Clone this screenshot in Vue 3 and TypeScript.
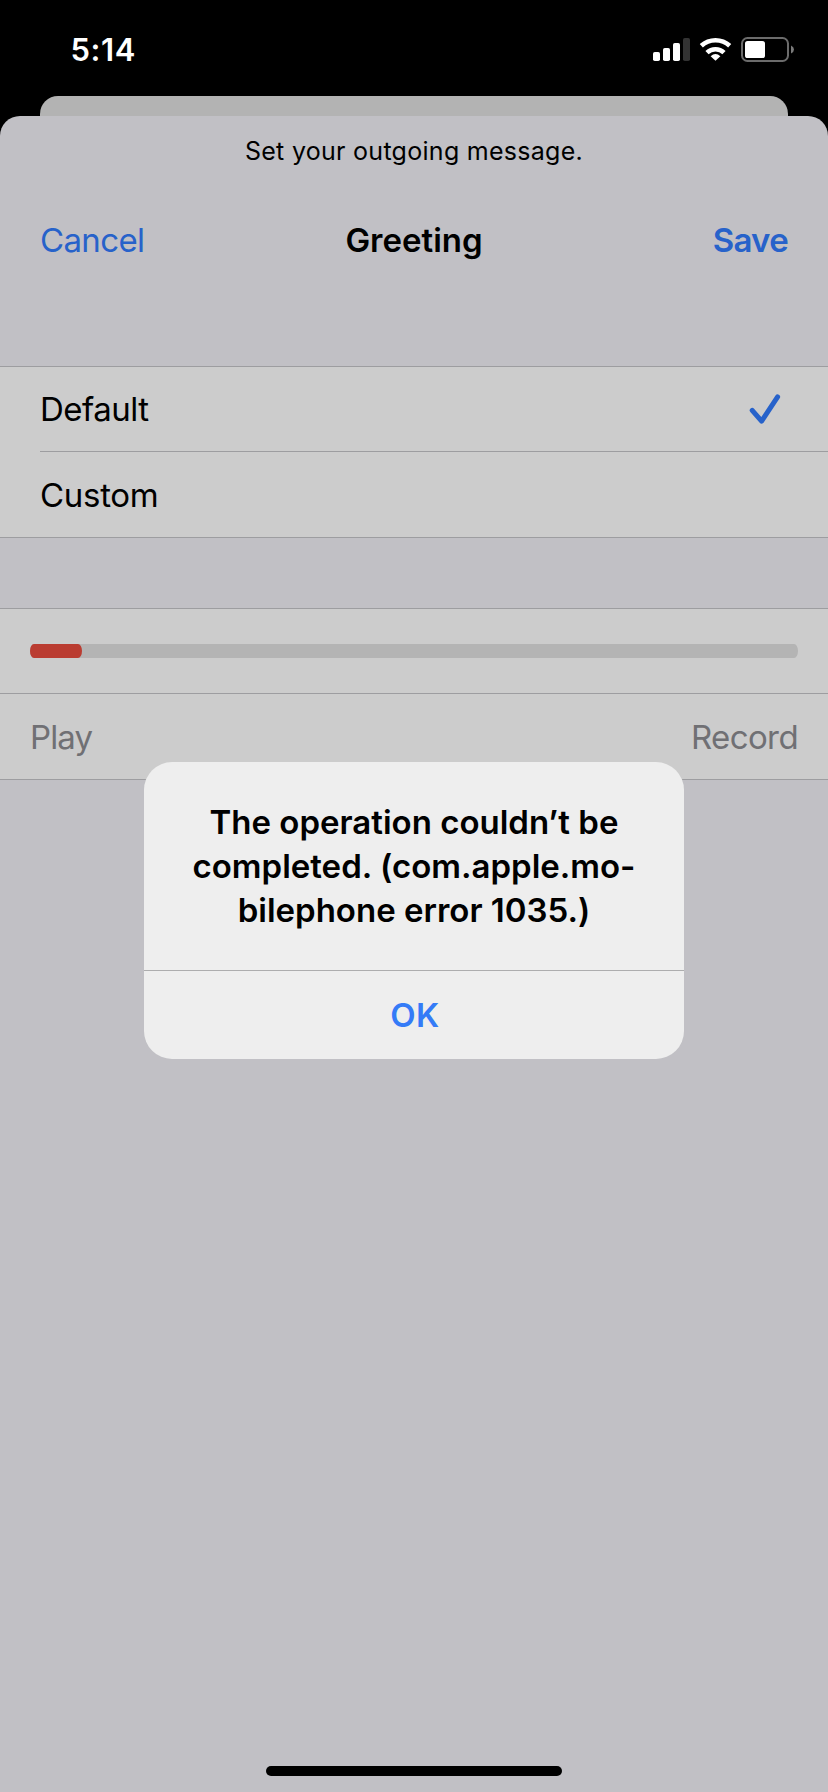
<script setup lang="ts">
interface GreetingOption {
  id: string
  label: string
  selected: boolean
}

const options: GreetingOption[] = [
  { id: 'default', label: 'Default', selected: true },
  { id: 'custom', label: 'Custom', selected: false },
]

const alertLines: string[] = [
  'The operation couldn’t be',
  'completed. (com.apple.mo-',
  'bilephone error 1035.)',
]

const progress = 52 / 768
</script>

<template>
  <div class="screen">
    <header class="status">
      <span class="time">5:14</span>
      <svg class="status-icons" width="144" height="28" viewBox="652 36 144 28">
        <g fill="#fff">
          <rect x="653" y="52" width="7" height="9" rx="1.8" />
          <rect x="663" y="48" width="7" height="13" rx="1.8" />
          <rect x="673" y="43" width="7" height="18" rx="1.8" />
          <rect x="683" y="38" width="7" height="23" rx="1.8" fill="#333" />
          <path d="M715.5 60.8 L710.6 56.2 Q715.5 51.8 720.4 56.2 Z" />
        </g>
        <g fill="none" stroke="#fff" stroke-width="4.6">
          <path d="M707 52.6 A12.3 12.3 0 0 1 724 52.6" />
          <path d="M701.3 45.8 A20.8 20.8 0 0 1 729.7 45.8" />
        </g>
        <rect x="742" y="38" width="46" height="23" rx="5.5" fill="none" stroke="#6b6b6b" stroke-width="2" />
        <rect x="745" y="41" width="20" height="17" rx="2.6" fill="#fff" />
        <path d="M791 45.5 Q794 46.8 794 49.5 Q794 52.2 791 53.5 Z" fill="#7a7a7a" />
      </svg>
    </header>

    <div class="card-behind"></div>

    <main class="sheet">
      <p class="prompt"><span>Set your outgoing message.</span></p>
      <nav class="nav">
        <span class="link cancel">Cancel</span>
        <span class="title">Greeting</span>
        <span class="link save">Save</span>
      </nav>

      <section class="group options">
        <div v-for="o in options" :key="o.id" class="row">
          <span :class="o.id">{{ o.label }}</span>
          <svg v-if="o.selected" class="check" width="32" height="32" viewBox="0 0 32 32">
            <path d="M3.2 17.3 L12.6 28.2 L28.6 3.8" />
          </svg>
        </div>
      </section>

      <section class="group player">
        <div class="row">
          <div class="track">
            <div class="fill" :style="{ width: progress * 100 + '%' }"></div>
          </div>
        </div>
        <div class="row">
          <span class="play">Play</span>
          <span class="record">Record</span>
        </div>
      </section>

      <div class="home"></div>
    </main>

    <div class="alert" role="alertdialog">
      <div class="message">
        <span v-for="(line, i) in alertLines" :key="i">{{ line }}</span>
      </div>
      <div class="ok"><span>OK</span></div>
    </div>
  </div>
</template>

<style>
body {
  margin: 0;
  background: #000;
}
</style>

<style scoped>
.screen {
  position: relative;
  width: 828px;
  height: 1792px;
  overflow: hidden;
  display: flex;
  flex-direction: column;
  background: #000;
  color: #000;
  font-family: Inter, 'Liberation Sans', sans-serif;
  font-size: 33px;
  white-space: nowrap;
}
.status {
  height: 96px;
  box-sizing: border-box;
  padding: 36px 32px 0 70.5px;
  display: flex;
  justify-content: space-between;
  align-items: flex-start;
  color: #fff;
}
.time {
  font-size: 31px;
  font-weight: 600;
  line-height: 28px;
  letter-spacing: 0.6px;
}
.card-behind {
  height: 20px;
  margin: 0 40px;
  border-radius: 18px 18px 0 0;
  background: #b3b3b3;
}
.sheet {
  flex: 1;
  display: flex;
  flex-direction: column;
  background: #c1c0c5;
  border-radius: 20px 20px 0 0;
}
.prompt {
  margin: 0;
  padding-top: 15px;
  height: 40px;
  line-height: 40px;
  text-align: center;
  font-size: 25px;
  letter-spacing: 0.28px;
}
.nav {
  display: grid;
  grid-template-columns: 1fr auto 1fr;
  height: 80px;
  margin-top: 29px;
  padding: 0 40px;
  align-items: center;
}
.link {
  color: #2762ca;
}
.cancel {
  letter-spacing: -0.65px;
}
.save {
  justify-self: end;
  font-weight: 600;
  letter-spacing: -0.7px;
}
.title {
  font-weight: 600;
}
.group {
  background: #ccc;
  border-top: 1px solid #9d9da0;
  border-bottom: 1px solid #9d9da0;
}
.options {
  margin-top: 86px;
}
.player {
  margin-top: 70px;
}
.row {
  height: 84px;
  display: flex;
  align-items: center;
  justify-content: space-between;
}
.row + .row {
  height: 85px;
  border-top: 1px solid #9d9da0;
}
.options .row {
  margin-left: 40px;
  padding-right: 47px;
}
.default {
  letter-spacing: -0.5px;
}
.custom {
  letter-spacing: -0.3px;
}
.check path {
  fill: none;
  stroke: #2762ca;
  stroke-width: 5;
  stroke-linecap: round;
  stroke-linejoin: round;
}
.player .row {
  padding: 0 30px;
  color: #707074;
}
.play {
  letter-spacing: -0.9px;
}
.record {
  letter-spacing: -0.6px;
}
.track {
  width: 768px;
  height: 14px;
  border-radius: 4px / 7px;
  background: #b4b4b4;
}
.fill {
  height: 14px;
  border-radius: 4px / 7px;
  background: #ba3c31;
}
.home {
  width: 296px;
  height: 10px;
  margin: auto auto 16px;
  border-radius: 5px;
  background: #000;
}
.alert {
  position: absolute;
  left: 144px;
  top: 762px;
  width: 540px;
  height: 297px;
  border-radius: 28px;
  background: #eee;
  font-weight: 600;
  text-align: center;
}
.message {
  height: 209px;
  box-sizing: border-box;
  padding-top: 38px;
  border-bottom: 1px solid #adadae;
}
.message span {
  display: block;
  line-height: 44px;
}
.ok {
  height: 88px;
  line-height: 88px;
  padding-left: 2px;
  letter-spacing: 0.5px;
  color: #347bf7;
}
</style>
